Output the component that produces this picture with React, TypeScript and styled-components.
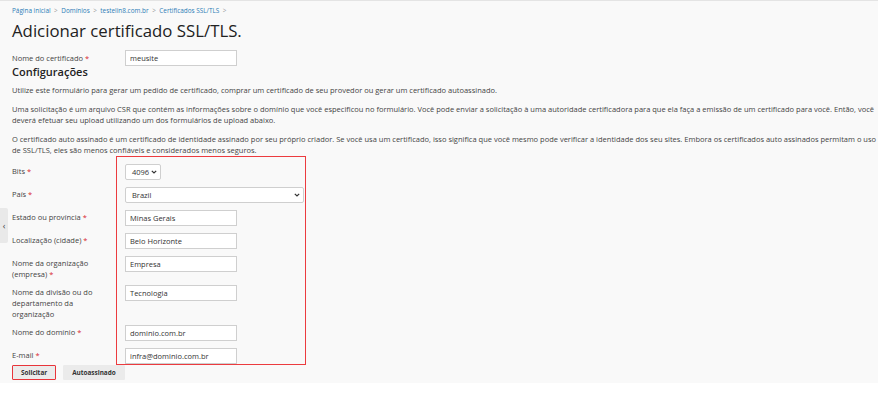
import React from 'react';
import styled, { createGlobalStyle } from 'styled-components';

const GlobalStyle = createGlobalStyle`
  html, body {
    margin: 0;
    padding: 0;
    background: #ffffff;
  }
  body {
    font-family: 'Open Sans', 'Liberation Sans', sans-serif;
    color: #333333;
  }
`

const Panel = styled.div`
  position: relative;
  box-sizing: border-box;
  width: 878px;
  height: 383px;
  background: #f9f9f9;
  border-top: 1px solid #e4e4e4;
  padding: 5px 0 0 12px;
`

const SideTab = styled.div`
  position: absolute;
  left: 0;
  top: 207px;
  width: 8px;
  height: 35px;
  background: #e9e9e9;
  border-radius: 0 2px 2px 0;
  display: flex;
  align-items: center;
  justify-content: center;
  font-size: 9px;
  color: #444;
`

const Crumbs = styled.div`
  display: flex;
  align-items: center;
  gap: 3.5px;
  font-size: 6.4px;
  line-height: 10px;
  color: #999;
`

const Crumb = styled.a`
  color: #2b7cb6;
  text-decoration: none;
`

const Title = styled.h1`
  margin: 3px 0 0;
  font-size: 16.8px;
  font-weight: 400;
  line-height: 24px;
  color: #222;
`

const Row = styled.div`
  display: flex;
  align-items: flex-start;
  margin-top: 7px;
`

const Label = styled.div`
  width: 113px;
  padding-top: 3px;
  font-size: 7.5px;
  line-height: 11px;
  color: #444;
`

const Req = styled.span`
  color: #d8262f;
`

const Section = styled.h2`
  margin: -2px 0 0;
  font-size: 11px;
  font-weight: 600;
  line-height: 16px;
  color: #222;
`

const Para = styled.p<{ $gap: number }>`
  margin: ${p => p.$gap}px 0 0;
  font-size: 7.5px;
  line-height: 11px;
  color: #444;
`

const Form = styled.div`
  display: grid;
  grid-template-columns: 104px 190px;
  row-gap: 7px;
  margin-top: 8px;
`

const Frame = styled.div`
  grid-column: 2;
  grid-row: 1 / span 8;
  margin: -8px 0 -1px;
  border: 1px solid #ec3b3f;
`

const FieldLabel = styled.div<{ $row: number }>`
  grid-column: 1;
  grid-row: ${p => p.$row};
  padding-top: 2px;
  margin-bottom: -2px;
  font-size: 7.5px;
  line-height: 11px;
  color: #444;
`

const Field = styled.div<{ $row: number }>`
  grid-column: 2;
  grid-row: ${p => p.$row};
  padding-left: 9px;
  display: flex;
`

const TextBox = styled.div<{ $w?: number }>`
  box-sizing: border-box;
  width: ${p => p.$w ?? 112}px;
  height: 16px;
  padding: 0 4px;
  background: #fff;
  border: 1px solid #cfcfcf;
  font-size: 7.5px;
  line-height: 14px;
  color: #333;
`

const SelectBox = styled(TextBox)`
  display: flex;
  justify-content: space-between;
  align-items: center;
  padding: 0 3px 0 6px;
  border-radius: 2px;
`

const Chevron = () => (
  <svg width="6" height="4" viewBox="0 0 6 4">
    <path d="M0.8 0.8 L3 3 L5.2 0.8" fill="none" stroke="#333" strokeWidth="1.2" />
  </svg>
)

const Buttons = styled.div`
  display: flex;
  gap: 7px;
  margin-top: 1px;
`

const Button = styled.div<{ $marked?: boolean }>`
  box-sizing: border-box;
  height: 15px;
  padding: 0 8px;
  display: flex;
  align-items: center;
  background: #ebebeb;
  border: ${p => (p.$marked ? '1.5px solid #e8343a' : '1px solid #ebebeb')};
  border-radius: 1px;
  font-size: 6.4px;
  font-weight: 700;
  color: #333;
`

const rows: { label: React.ReactNode; value: string; kind?: 'wide' | 'small' }[] = [
  { label: <>Bits <Req>*</Req></>, value: '4096', kind: 'small' },
  { label: <>País <Req>*</Req></>, value: 'Brazil', kind: 'wide' },
  { label: <>Estado ou província <Req>*</Req></>, value: 'Minas Gerais' },
  { label: <>Localização (cidade) <Req>*</Req></>, value: 'Belo Horizonte' },
  { label: <>Nome da organização<br />(empresa) <Req>*</Req></>, value: 'Empresa' },
  { label: <>Nome da divisão ou do<br />departamento da<br />organização</>, value: 'Tecnologia' },
  { label: <>Nome do domínio <Req>*</Req></>, value: 'dominio.com.br' },
  { label: <>E-mail <Req>*</Req></>, value: 'infra@dominio.com.br' },
]

const App: React.FC = () => {
  return (
    <>
      <GlobalStyle />
      <Panel>
        <SideTab>‹</SideTab>
        <Crumbs>
          <Crumb href="#">Página inicial</Crumb>&gt;
          <Crumb href="#">Domínios</Crumb>&gt;
          <Crumb href="#">testelin8.com.br</Crumb>&gt;
          <Crumb href="#">Certificados SSL/TLS</Crumb>&gt;
        </Crumbs>
        <Title>Adicionar certificado SSL/TLS.</Title>
        <Row>
          <Label>Nome do certificado <Req>*</Req></Label>
          <TextBox>meusite</TextBox>
        </Row>
        <Section>Configurações</Section>
        <Para $gap={5}>Utilize este formulário para gerar um pedido de certificado, comprar um certificado de seu provedor ou gerar um certificado autoassinado.</Para>
        <Para $gap={8}>Uma solicitação é um arquivo CSR que contém as informações sobre o domínio que você especificou no formulário. Você pode enviar a solicitação à uma autoridade certificadora para que ela faça a emissão de um certificado para você. Então, você deverá efetuar seu upload utilizando um dos formulários de upload abaixo.</Para>
        <Para $gap={8}>O certificado auto assinado é um certificado de identidade assinado por seu próprio criador. Se você usa um certificado, isso significa que você mesmo pode verificar a identidade dos seu sites. Embora os certificados auto assinados permitam o uso de SSL/TLS, eles são menos confiáveis e considerados menos seguros.</Para>
        <Form>
          <Frame />
          {rows.map((r, i) => (
            <React.Fragment key={i}>
              <FieldLabel $row={i + 1}>{r.label}</FieldLabel>
              <Field $row={i + 1}>
                {r.kind === 'small' ? (
                  <SelectBox $w={36}>{r.value}<Chevron /></SelectBox>
                ) : r.kind === 'wide' ? (
                  <SelectBox $w={179}>{r.value}<Chevron /></SelectBox>
                ) : (
                  <TextBox>{r.value}</TextBox>
                )}
              </Field>
            </React.Fragment>
          ))}
        </Form>
        <Buttons>
          <Button $marked>Solicitar</Button>
          <Button>Autoassinado</Button>
        </Buttons>
      </Panel>
    </>
  );
};

export default App;
